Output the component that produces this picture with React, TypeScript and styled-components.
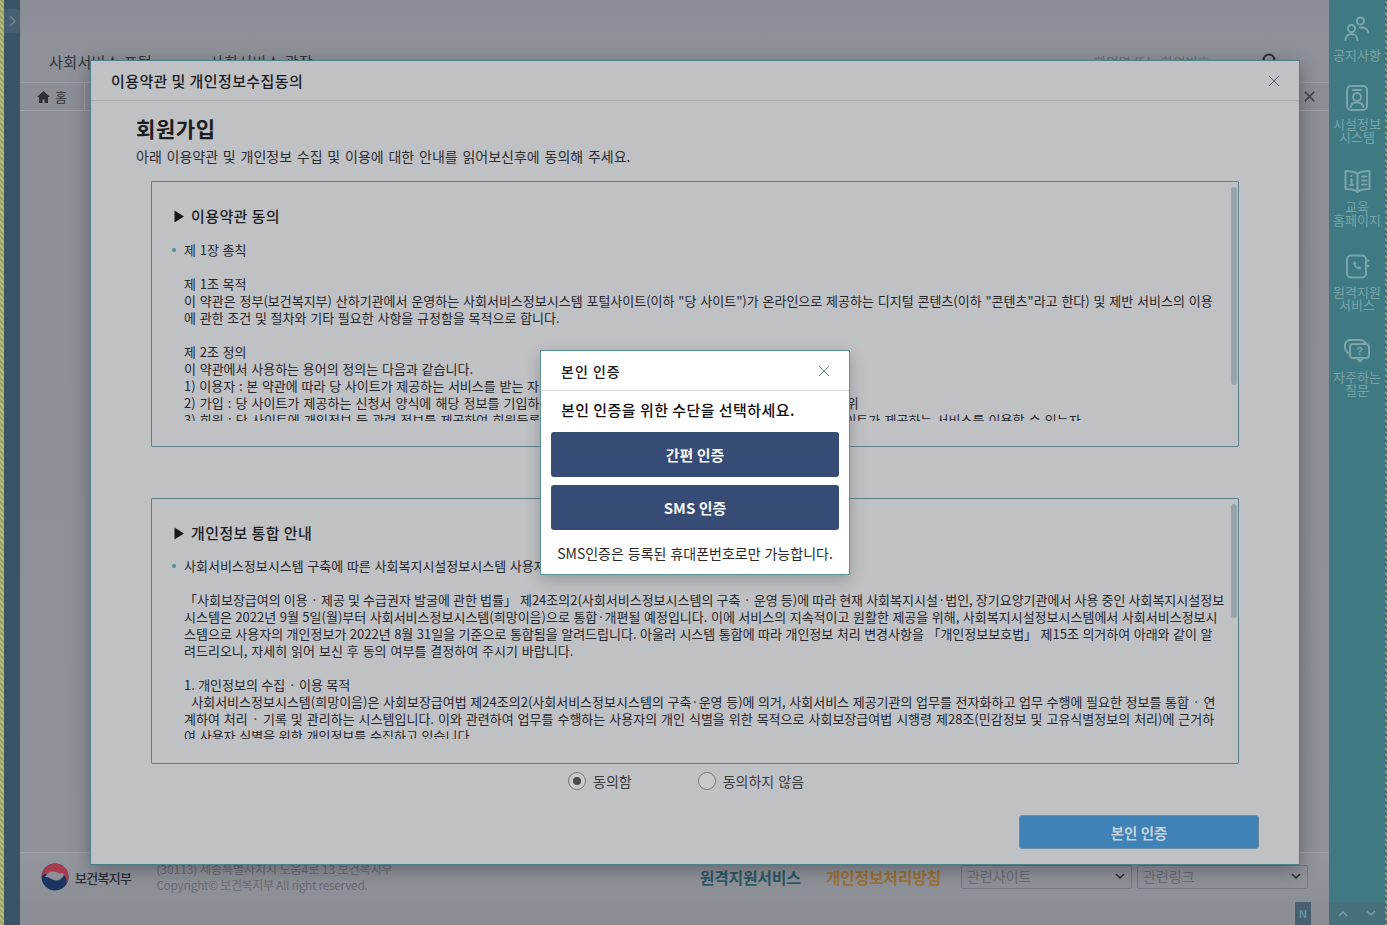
import React from 'react';
import styled, { createGlobalStyle } from 'styled-components';

const Global = createGlobalStyle`
  html, body { margin: 0; padding: 0; height: 925px; overflow: hidden; background: #8c8e96; }
  body { font-family: "Noto Sans CJK KR", "Noto Sans", "Liberation Sans", sans-serif; color: #1c1d20; }
  * { box-sizing: border-box; }
`;

const Shell = styled.div`
  position: relative;
  display: flex;
  width: 1387px;
  height: 925px;
  overflow: hidden;
`;
const Strip = styled.div`
  width: 4px;
  background: repeating-linear-gradient(45deg, #b5ba78 0 2px, #9aa268 2px 4px);
`;
const Rail = styled.div`
  width: 16px;
  background: #3a5366;
  position: relative;
`;
const RailToggle = styled.div`
  position: absolute;
  top: 9px;
  left: 0;
  width: 16px;
  height: 24px;
  border-radius: 0 4px 4px 0;
  background: #475f71;
  display: flex;
  align-items: center;
  justify-content: center;
`;
const Main = styled.div`
  flex: none;
  width: 1309px;
  display: flex;
  flex-direction: column;
`;
const TopBand = styled.div`
  height: 42px;
  background: linear-gradient(#8a8d96, #8f9199);
`;
const NavRow = styled.div`
  height: 40px;
  padding: 0 0 2px 29px;
  background: #8f9199;
  display: flex;
  align-items: center;
  font-size: 15px;
  letter-spacing: 0.4px;
  color: #33353a;
`;
const NavCrumb = styled.span`
  margin-left: 45px;
`;
const NavSearch = styled.div`
  margin-left: auto;
  display: flex;
  align-items: center;
  gap: 52px;
  padding-right: 51px;
  font-size: 13px;
  letter-spacing: 0.2px;
  color: #6c6e75;
  height: 100%;
`;
const TabRow = styled.div`
  height: 29px;
  display: flex;
  align-items: stretch;
  justify-content: space-between;
  background: #8c8e96;
  border-top: 1px solid #9c9ea5;
  border-bottom: 1px solid #a0a2a9;
`;
const HomeTab = styled.div`
  width: 65px;
  display: flex;
  align-items: center;
  justify-content: center;
  gap: 5px;
  border-right: 1px solid #9c9ea5;
  font-size: 13px;
  color: #33353a;
`;
const TabClose = styled.div`
  width: 40px;
  display: flex;
  align-items: center;
  justify-content: center;
`;
const Content = styled.div`
  flex: 1;
  background: linear-gradient(#8d8f97, #8f9199);
`;
const Footer = styled.div`
  height: 50px;
  border-top: 1px solid #a0a2a9;
  background: linear-gradient(#94969e, #8d8f97);
  display: flex;
  align-items: center;
  padding: 0 21px 1px;
`;
const Ministry = styled.div`
  display: flex;
  align-items: center;
  gap: 6px;
  font-size: 13px;
  font-weight: 500;
  color: #2d2f35;
  letter-spacing: -0.7px;
`;
const Address = styled.div`
  margin-left: 25px;
  margin-bottom: 1px;
  font-size: 12px;
  line-height: 16px;
  letter-spacing: -0.05px;
  color: #6b6d74;
`;
const Copyright = styled.span`
  letter-spacing: -0.35px;
`;
const FooterLink = styled.span<{ $color: string }>`
  font-size: 16px;
  font-weight: 700;
  color: ${p => p.$color};
  letter-spacing: -0.3px;
`;
const FooterLinks = styled.div`
  margin-left: auto;
  display: flex;
  align-items: center;
  gap: 5px;
`;
const FooterLinkGroup = styled.div`
  display: flex;
  gap: 25px;
  margin-right: 15px;
`;
const FakeSelect = styled.div`
  width: 171px;
  height: 24px;
  border: 1px solid #787a81;
  border-radius: 2px;
  display: flex;
  align-items: center;
  justify-content: space-between;
  padding: 0 6px 2px 5px;
  font-size: 14px;
  color: #6c6e75;
`;
const BottomBar = styled.div`
  height: 23px;
  background: #8c8e96;
  display: flex;
  justify-content: flex-end;
  padding-right: 18px;
`;
const NBadge = styled.div`
  width: 16px;
  background: #47606f;
  color: #5f9aa5;
  font: 700 11px "Liberation Sans", sans-serif;
  display: flex;
  align-items: center;
  justify-content: center;
`;
const Side = styled.div`
  flex: none;
  width: 56px;
  background: #3f7a82;
  display: flex;
  flex-direction: column;
  color: #7aa3a9;
`;
const SideList = styled.div`
  flex: 1;
`;
const SideItem = styled.div<{ $h: number }>`
  height: ${p => p.$h}px;
  display: flex;
  flex-direction: column;
  align-items: center;
  font-size: 13px;
  line-height: 13px;
  text-align: center;
  white-space: nowrap;
`;
const SideIcon = styled.div`
  height: 32px;
  margin-top: 13px;
  margin-bottom: 3px;
  display: flex;
  align-items: center;
`;
const SideBottom = styled.div`
  height: 23px;
  background: #46707a;
  display: flex;
  align-items: center;
  justify-content: space-around;
`;
const Edge = styled.div`
  width: 2px;
  background: repeating-linear-gradient(45deg, #7f9c77 0 2px, #4a6a5c 2px 4px);
`;

const Layer = styled.div`
  position: absolute;
  inset: 0;
  display: flex;
  align-items: center;
  justify-content: center;
  padding-left: 3px;
`;
const TermsModal = styled.div`
  width: 1210px;
  height: 805px;
  background: #c0c1c5;
  border: 1px solid #4d8088;
  box-shadow: 0 5px 18px rgba(0, 0, 0, 0.32);
  display: flex;
  flex-direction: column;
`;
const ModalHeader = styled.div`
  height: 40px;
  flex: none;
  display: flex;
  align-items: center;
  justify-content: space-between;
  padding: 0 19px 0 20px;
  border-bottom: 1px solid #a9abb0;
  font-size: 15px;
  font-weight: 500;
  letter-spacing: 0.4px;
`;
const ModalBody = styled.div`
  flex: 1;
  padding: 13px 40px 15px 45px;
  display: flex;
  flex-direction: column;
`;
const Title = styled.h1`
  margin: 0 0 5px;
  font-size: 21px;
  line-height: 28px;
  font-weight: 700;
  letter-spacing: 0.6px;
`;
const Lead = styled.p`
  margin: 0 0 16px;
  font-size: 14px;
  line-height: 18px;
  word-spacing: 1.65px;
  color: #2c2d31;
`;
const TermsBox = styled.section<{ $gap: number }>`
  position: relative;
  flex: none;
  width: 1088px;
  height: 266px;
  margin-left: 15px;
  margin-bottom: ${p => p.$gap}px;
  border: 1px solid #5f8088;
  border-radius: 1px;
  padding: 23px 0 0 22px;
`;
const BoxTitle = styled.h2`
  margin: 0;
  height: 20px;
  display: flex;
  align-items: center;
  gap: 6px;
  font-size: 15px;
  font-weight: 500;
  letter-spacing: 0.4px;
  color: #1d1e22;
`;
const Scroll = styled.div<{ $h: number; $top: number }>`
  margin: ${p => p.$top}px 0 0 -4px;
  height: ${p => p.$h}px;
  width: 1054px;
  overflow: hidden;
  padding-left: 14px;
`;
const Line = styled.div<{ $bullet?: boolean; $ws?: number }>`
  position: relative;
  min-height: 17px;
  font-size: 13px;
  line-height: 17px;
  white-space: pre;
  color: #26272b;
  word-spacing: ${p => p.$ws ?? 0.8}px;
  ${p => p.$bullet ? `
    &::before {
      content: "";
      position: absolute;
      left: -12px;
      top: 7px;
      width: 4px;
      height: 4px;
      border-radius: 50%;
      background: #4f8f95;
    }
  ` : ''}
`;
const Thumb = styled.div<{ $h: number }>`
  position: absolute;
  top: 5px;
  right: 1px;
  width: 6px;
  height: ${p => p.$h}px;
  border-radius: 3px;
  background: #97a3a9;
`;
const Consent = styled.div`
  flex: none;
  display: flex;
  align-items: center;
  height: 18px;
  margin-top: -43px;
  padding-left: 432px;
  gap: 66px;
  font-size: 14px;
  word-spacing: 1px;
  color: #3b3c41;
`;
const Radio = styled.label`
  display: flex;
  align-items: center;
  gap: 7px;
`;
const RadioDot = styled.span<{ $on?: boolean }>`
  width: 18px;
  height: 18px;
  border-radius: 50%;
  border: 1px solid #76787e;
  background: #c9cacd;
  display: flex;
  align-items: center;
  justify-content: center;
  &::after {
    content: "";
    width: 8px;
    height: 8px;
    border-radius: 50%;
    background: ${p => (p.$on ? '#4b4c52' : 'transparent')};
  }
`;
const ActionRow = styled.div`
  flex: none;
  display: flex;
  justify-content: flex-end;
  margin-top: 25px;
`;
const PrimaryButton = styled.button`
  width: 240px;
  height: 34px;
  border: 1px solid #6e8ea8;
  border-radius: 3px;
  background: #3f82b7;
  color: #c6d1da;
  font: 700 14.500px "Noto Sans CJK KR", sans-serif;
`;
const DialogLayer = styled(Layer)``;
const Dialog = styled.div`
  width: 310px;
  height: 225px;
  background: #fff;
  border: 1px solid #5d9298;
  box-shadow: 0 5px 15px rgba(0, 0, 0, 0.22);
  display: flex;
  flex-direction: column;
`;
const DialogHeader = styled.div`
  height: 40px;
  flex: none;
  display: flex;
  align-items: center;
  justify-content: space-between;
  padding: 0 19px 0 20px;
  border-bottom: 1px solid #dcdcdc;
  font-size: 14px;
  font-weight: 500;
  letter-spacing: 1px;
  color: #1b1b1b;
`;
const DialogBody = styled.div`
  flex: 1;
  padding: 0 10px;
  display: flex;
  flex-direction: column;
`;
const Prompt = styled.p`
  margin: 0;
  padding: 9px 10px 0;
  height: 41px;
  font-size: 15px;
  line-height: 20px;
  font-weight: 500;
  letter-spacing: 0.45px;
  color: #111;
`;
const AuthButton = styled.button`
  height: 45px;
  flex: none;
  margin-bottom: 8px;
  border: none;
  border-radius: 3px;
  background: #364c74;
  color: #f4f5f8;
  font: 700 15px "Noto Sans CJK KR", sans-serif;
`;
const Note = styled.p`
  margin: -1px -6px 0;
  font-size: 14px;
  line-height: 32px;
  height: 32px;
  text-align: center;
  white-space: nowrap;
  word-spacing: 0.8px;
  color: #2a2a2a;
`;

type Row = { t: string; b?: boolean; w?: number };
const terms: Row[] = [
  { t: '제 1장 총칙', b: true },
  { t: '' },
  { t: '제 1조 목적' },
  { t: '이 약관은 정부(보건복지부) 산하기관에서 운영하는 사회서비스정보시스템 포털사이트(이하 "당 사이트")가 온라인으로 제공하는 디지털 콘텐츠(이하 "콘텐츠"라고 한다) 및 제반 서비스의 이용', w: 0.9 },
  { t: '에 관한 조건 및 절차와 기타 필요한 사항을 규정함을 목적으로 합니다.' },
  { t: '' },
  { t: '제 2조 정의' },
  { t: '이 약관에서 사용하는 용어의 정의는 다음과 같습니다.' },
  { t: '1) 이용자 : 본 약관에 따라 당 사이트가 제공하는 서비스를 받는 자' },
  { t: '2) 가입 : 당 사이트가 제공하는 신청서 양식에 해당 정보를 기입하고, 본 약관에 동의하여 서비스 이용계약을 완료시키는 행위', w: 1.2 },
  { t: '3) 회원 : 당 사이트에 개인정보 등 관련 정보를 제공하여 회원등록을 한 개인으로서, 당 사이트의 정보를 제공받으며, 당 사이트가 제공하는 서비스를 이용할 수 있는자', w: 1.3 },
];
const privacy: Row[] = [
  { t: '사회서비스정보시스템 구축에 따른 사회복지시설정보시스템 사용자 개인정보 통합 안내', b: true },
  { t: '' },
  { t: '「사회보장급여의 이용 · 제공 및 수급권자 발굴에 관한 법률」 제24조의2(사회서비스정보시스템의 구축 · 운영 등)에 따라 현재 사회복지시설·법인, 장기요양기관에서 사용 중인 사회복지시설정보', w: 0.15 },
  { t: '시스템은 2022년 9월 5일(월)부터 사회서비스정보시스템(희망이음)으로 통합·개편될 예정입니다. 이에 서비스의 지속적이고 원활한 제공을 위해, 사회복지시설정보시스템에서 사회서비스정보시', w: 0.6 },
  { t: '스템으로 사용자의 개인정보가 2022년 8월 31일을 기준으로 통합됨을 알려드립니다. 아울러 시스템 통합에 따라 개인정보 처리 변경사항을 「개인정보보호법」 제15조 의거하여 아래와 같이 알', w: 0.55 },
  { t: '려드리오니, 자세히 읽어 보신 후 동의 여부를 결정하여 주시기 바랍니다.', w: 1 },
  { t: '' },
  { t: '1. 개인정보의 수집 · 이용 목적', w: 0.4 },
  { t: '  사회서비스정보시스템(희망이음)은 사회보장급여법 제24조의2(사회서비스정보시스템의 구축·운영 등)에 의거, 사회서비스 제공기관의 업무를 전자화하고 업무 수행에 필요한 정보를 통합 · 연', w: 0.7 },
  { t: '계하여 처리 · 기록 및 관리하는 시스템입니다. 이와 관련하여 업무를 수행하는 사용자의 개인 식별을 위한 목적으로 사회보장급여법 시행령 제28조(민감정보 및 고유식별정보의 처리)에 근거하', w: 1.05 },
  { t: '여 사용자 식별을 위한 개인정보를 수집하고 있습니다.' },
];

const IC = '#7ba5aa';
const Stroke = { fill: 'none', stroke: IC, strokeWidth: 2, strokeLinecap: 'round' as const, strokeLinejoin: 'round' as const };

const PeopleIcon = () => (
  <svg width="26" height="26" viewBox="0 0 26 26" {...Stroke}>
    <circle cx="16.5" cy="5" r="3.6" />
    <path d="M16 11.5c4-.3 7.5 1.5 8.5 5" />
    <circle cx="7.5" cy="12.5" r="3.6" />
    <path d="M1.5 24c.3-3.6 2.7-6 6-6s5.8 2.4 6 6" />
  </svg>
);
const BadgeIcon = () => (
  <svg width="24" height="28" viewBox="0 0 24 28" {...Stroke}>
    <rect x="2" y="2" width="20" height="24" rx="4" />
    <path d="M8 6h8" />
    <circle cx="12" cy="13" r="4" />
    <path d="M5.5 23c.6-3 3-4.5 6.500-4.500s5.900 1.500 6.500 4.500" />
  </svg>
);
const BookIcon = () => (
  <svg width="27" height="25" viewBox="0 0 27 25" {...Stroke}>
    <path d="M13.500 5C11 2.500 6 2 1.500 2v18c4.500 0 9.500.5 12 3 2.500-2.500 7.500-3 12-3V2c-4.500 0-9.500.5-12 3zM13.500 5v18" />
    <path d="M7.500 6.500v.5M7.500 10v6M6 16h3M18 7.500h4.500M18 11.500h4.500M18 15.500h4.500" />
  </svg>
);
const PhoneIcon = () => (
  <svg width="25" height="25" viewBox="0 0 25 25" {...Stroke}>
    <rect x="2" y="1.500" width="19" height="22" rx="4" />
    <path d="M21 6.500h2.500M21 12h2.500" />
    <path d="M8.500 8c-.8 4 3 7.500 7 7.500l.8-2-2.600-1-1 .8c-1-.5-1.800-1.400-2.200-2.400l.9-1-1-2.600z" fill={IC} stroke="none" />
  </svg>
);
const ChatIcon = () => (
  <svg width="28" height="26" viewBox="0 0 28 26" {...Stroke}>
    <path d="M5 15C2.500 13 1.500 10.500 2 7c.5-3 3-5 6-5h9c2.500 0 4.500 1 5.500 3" />
    <rect x="7" y="6" width="19" height="14" rx="3" />
    <path d="M14 20l3 3.500 3-3.500" />
    <text x="16.500" y="17" fontSize="11" fontWeight="700" textAnchor="middle" fill={IC} stroke="none" fontFamily="Liberation Sans">?</text>
  </svg>
);
const CloseX = ({ size, color, w }: { size: number; color: string; w: number }) => (
  <svg width={size} height={size} viewBox="0 0 12 12" fill="none" stroke={color} strokeWidth={w}>
    <path d="M1 1l10 10M11 1L1 11" />
  </svg>
);
const Chevron = ({ color, up }: { color: string; up?: boolean }) => (
  <svg width="10" height="7" viewBox="0 0 10 7" fill="none" stroke={color} strokeWidth="1.500">
    <path d={up ? 'M1 6l4-4 4 4' : 'M1 1l4 4 4-4'} />
  </svg>
);
const ChevronRight = () => (
  <svg width="7" height="12" viewBox="0 0 7 12" fill="none" stroke="#6f8494" strokeWidth="1.500">
    <path d="M1 1l5 5-5 5" />
  </svg>
);
const Triangle = () => (
  <svg width="11" height="13" viewBox="0 0 11 13" style={{ marginTop: 2 }}>
    <path d="M.5.500l9.500 6-9.500 6z" fill="#1a1a1e" />
  </svg>
);
const HomeIcon = () => (
  <svg width="13" height="12" viewBox="0 0 13 12">
    <path d="M6.500 0L0 6h2v6h3.500V8.500h2V12H11V6h2z" fill="#2f3136" />
  </svg>
);
const SearchGlyph = () => (
  <svg width="16" height="16" viewBox="0 0 16 16" fill="none" stroke="#2c2e33" strokeWidth="2">
    <circle cx="7" cy="7" r="5.500" />
    <path d="M11 11l4 4" />
  </svg>
);
const Logo = () => (
  <svg width="28" height="28" viewBox="0 0 28 28">
    <circle cx="14" cy="14" r="13.500" fill="#1c3560" />
    <path d="M.5 14A13.500 13.500 0 0 1 27.500 14c0 2-1 5-2 6 .5-3-.5-7-4-8.500-3-1.300-5.500.2-7.500 1.500-2.500 1.500-5 1.500-7-.5-2-2-3-3-6.500 1.500z" fill="#a83b4d" />
    <path d="M4 14c2-4 5-6 9-5.500 3 .3 5 2.500 8 1.800 2.500-.5 2 2.700.5 4.200-2.500 2.500-5.500 3.500-8.500 2.500-3.500-1-5-3.500-9-3z" fill="#8f9199" />
  </svg>
);

export default function App() {
  return (
    <Shell>
      <Global />
      <Strip />
      <Rail>
        <RailToggle>
          <ChevronRight />
        </RailToggle>
      </Rail>
      <Main>
        <TopBand />
        <NavRow>
          사회서비스 포털
          <NavCrumb>· 사회서비스 광장</NavCrumb>
          <NavSearch>
            화면명 또는 화면번호
            <SearchGlyph />
          </NavSearch>
        </NavRow>
        <TabRow>
          <HomeTab>
            <HomeIcon />홈
          </HomeTab>
          <TabClose>
            <CloseX size={11} color="#46484f" w={1.8} />
          </TabClose>
        </TabRow>
        <Content />
        <Footer>
          <Ministry>
            <Logo />
            보건복지부
          </Ministry>
          <Address>
            (30113) 세종특별자치시 도움4로 13 보건복지부
            <br />
            <Copyright>Copyright© 보건복지부 All right reserved.</Copyright>
          </Address>
          <FooterLinks>
            <FooterLinkGroup>
              <FooterLink $color="#2c5a66">원격지원서비스</FooterLink>
              <FooterLink $color="#9b7238">개인정보처리방침</FooterLink>
            </FooterLinkGroup>
            <FakeSelect>
              관련사이트
              <Chevron color="#2b2d32" />
            </FakeSelect>
            <FakeSelect>
              관련링크
              <Chevron color="#2b2d32" />
            </FakeSelect>
          </FooterLinks>
        </Footer>
        <BottomBar>
          <NBadge>N</NBadge>
        </BottomBar>
      </Main>
      <Side>
        <SideList>
          <SideItem $h={69}>
            <SideIcon><PeopleIcon /></SideIcon>
            공지사항
          </SideItem>
          <SideItem $h={83}>
            <SideIcon><BadgeIcon /></SideIcon>
            시설정보<br />시스템
          </SideItem>
          <SideItem $h={85}>
            <SideIcon><BookIcon /></SideIcon>
            교육<br />홈페이지
          </SideItem>
          <SideItem $h={85}>
            <SideIcon><PhoneIcon /></SideIcon>
            원격지원<br />서비스
          </SideItem>
          <SideItem $h={84}>
            <SideIcon><ChatIcon /></SideIcon>
            자주하는<br />질문
          </SideItem>
        </SideList>
        <SideBottom>
          <Chevron color="#7a9da3" up />
          <Chevron color="#7a9da3" />
        </SideBottom>
      </Side>
      <Edge />

      <Layer>
        <TermsModal>
          <ModalHeader>
            이용약관 및 개인정보수집동의
            <CloseX size={12} color="#5b6478" w={1} />
          </ModalHeader>
          <ModalBody>
            <Title>회원가입</Title>
            <Lead>아래 이용약관 및 개인정보 수집 및 이용에 대한 안내를 읽어보신후에 동의해 주세요.</Lead>
            <TermsBox $gap={51}>
              <BoxTitle><Triangle />이용약관 동의</BoxTitle>
              <Scroll $h={180} $top={16}>
                {terms.map((l, i) => <Line key={i} $bullet={l.b} $ws={l.w}>{l.t}</Line>)}
              </Scroll>
              <Thumb $h={198} />
            </TermsBox>
            <TermsBox $gap={51}>
              <BoxTitle><Triangle />개인정보 통합 안내</BoxTitle>
              <Scroll $h={182} $top={15}>
                {privacy.map((l, i) => <Line key={i} $bullet={l.b} $ws={l.w}>{l.t}</Line>)}
              </Scroll>
              <Thumb $h={114} />
            </TermsBox>
            <Consent>
              <Radio><RadioDot $on />동의함</Radio>
              <Radio><RadioDot />동의하지 않음</Radio>
            </Consent>
            <ActionRow>
              <PrimaryButton>본인 인증</PrimaryButton>
            </ActionRow>
          </ModalBody>
        </TermsModal>
      </Layer>

      <DialogLayer>
        <Dialog>
          <DialogHeader>
            본인 인증
            <CloseX size={12} color="#6d84a6" w={1} />
          </DialogHeader>
          <DialogBody>
            <Prompt>본인 인증을 위한 수단을 선택하세요.</Prompt>
            <AuthButton>간편 인증</AuthButton>
            <AuthButton>SMS 인증</AuthButton>
            <Note>SMS인증은 등록된 휴대폰번호로만 가능합니다.</Note>
          </DialogBody>
        </Dialog>
      </DialogLayer>
    </Shell>
  );
}
